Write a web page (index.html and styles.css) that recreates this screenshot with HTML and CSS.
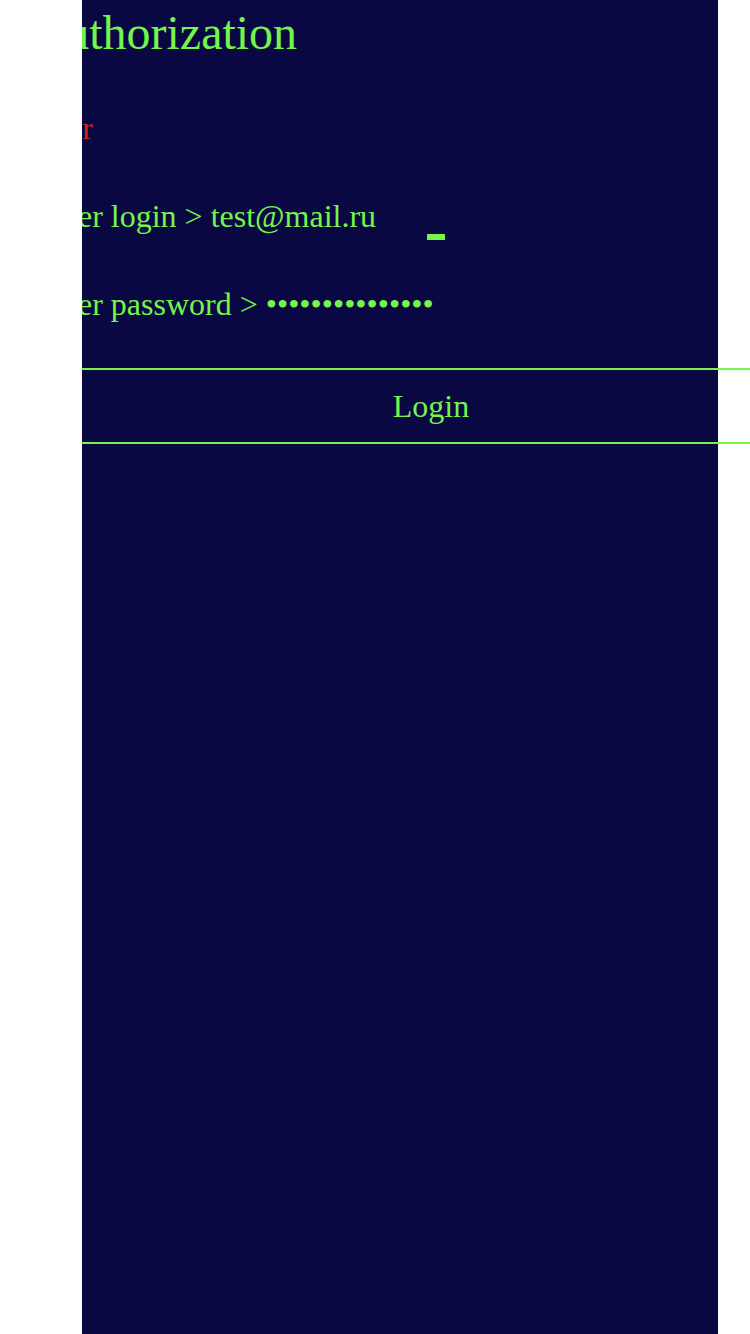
FILE: index.html
```html
<!DOCTYPE html>
<html lang="en">
<head>
<meta charset="utf-8">
<title>Authorization</title>
<link rel="stylesheet" href="styles.css">
</head>
<body>
<main class="panel">
  <div class="content">
    <h1 class="title">Authorization</h1>
    <p class="error">Error</p>
    <div class="row row-login">
      <span class="label">Enter login &gt; </span><span class="value">test@mail.ru</span><span class="cursor"></span>
    </div>
    <div class="row row-password">
      <span class="label">Enter password &gt; </span><span class="value dots">•••••••••••••••</span>
    </div>
    <button class="login-btn" type="button">Login</button>
  </div>
</main>
</body>
</html>
```
FILE: styles.css
```css
html, body {
  margin: 0;
  padding: 0;
  background: #ffffff;
  overflow: hidden;
}

body {
  font-family: "Liberation Serif", "Times New Roman", serif;
  color: #74f54b;
}

.panel {
  margin-left: 82px;
  width: 636px;
  min-height: 1334px;
  background: #0a0842;
  clip-path: inset(0 -300px 0 0);
}

.content {
  margin-left: -53px;
  width: 804px;
}

.title {
  margin: 0;
  padding-left: 1.5px;
  font-size: 48px;
  font-weight: normal;
  line-height: 66px;
  height: 66px;
  white-space: nowrap;
}

.error {
  margin: 44px 0 0 -3.5px;
  font-size: 32px;
  line-height: 36px;
  height: 36px;
  color: #d2231d;
  white-space: nowrap;
}

.row {
  font-size: 32px;
  line-height: 36px;
  height: 36px;
  padding-left: 4.5px;
  white-space: nowrap;
}

.row-login {
  margin-top: 52px;
}

.row-password {
  margin-top: 52px;
}

.dots {
  line-height: 0;
}

.cursor {
  display: inline-block;
  width: 18px;
  height: 6px;
  margin-left: 51px;
  background: #74f54b;
  vertical-align: -13px;
}

.login-btn {
  display: block;
  margin-top: 46px;
  width: 804px;
  height: 76px;
  padding: 0;
  background: transparent;
  border: none;
  border-top: 2px solid #74f54b;
  border-bottom: 2px solid #74f54b;
  color: #74f54b;
  font-family: "Liberation Serif", "Times New Roman", serif;
  font-size: 32px;
  line-height: 72px;
  text-align: center;
}
```
